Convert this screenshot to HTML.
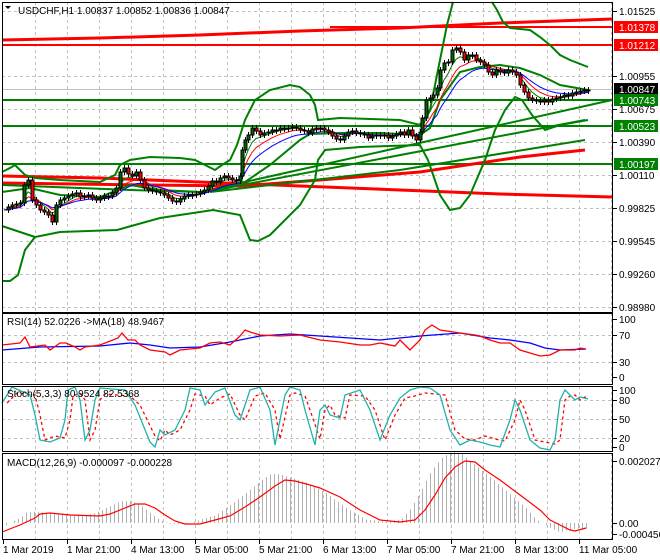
<!DOCTYPE html>
<html><head><meta charset="utf-8"><style>
html,body{margin:0;padding:0;background:#fff;width:660px;height:560px;overflow:hidden}
svg{display:block;font-family:"Liberation Sans",sans-serif}
</style></head><body>
<svg id="s" width="660" height="560" xmlns="http://www.w3.org/2000/svg"></svg>
<script>
var o='';
function P(pts,c,w,extra){var d=pts.map(function(p,i){return (i?'L':'M')+p[0]+' '+p[1]}).join('');o+='<path d="'+d+'" fill="none" stroke="'+c+'" stroke-width="'+w+'" '+(extra||'')+'/>';}
function L(x1,y1,x2,y2,c,w,ex){o+='<line x1="'+x1+'" y1="'+y1+'" x2="'+x2+'" y2="'+y2+'" stroke="'+c+'" stroke-width="'+w+'" '+(ex||'')+'/>';}
function T(x,y,t,c,fs,anchor){o+='<text x="'+x+'" y="'+y+'" fill="'+(c||'#000')+'" font-size="'+(fs||10)+'"'+(anchor?' text-anchor="'+anchor+'"':'')+'>'+t+'</text>';}
var DASH='stroke-dasharray="3,3"';
// vertical grid
var panels=[[2,312],[313,384],[386,451],[453,539]];
for(var x=35;x<612;x+=32){panels.forEach(function(p){L(x+.5,p[0],x+.5,p[1],'#c0c0c0',1,DASH)});}
// main horizontal grid
[11,44,76,109,142,175,208,241,274,307].forEach(function(y){L(2,y+.5,612,y+.5,'#c0c0c0',1,DASH)});
L(2,89.5,612,89.5,'#c0c0c0',1);
// rsi grid
[335,362].forEach(function(y){L(2,y+.5,612,y+.5,'#c0c0c0',1,DASH)});
[400,419,438].forEach(function(y){L(2,y+.5,612,y+.5,'#c0c0c0',1,DASH)});
// horizontal levels
L(2,45,612,45,'#ff0000',2);
L(330,27,612,27,'#ff0000',2);
P([[2,40],[100,38],[200,35],[300,31],[400,28],[500,23],[612,19]],'#ff0000',3);
L(2,100,612,100,'#008000',2);L(2,126,612,126,'#008000',2);L(2,164,612,164,'#008000',2);
// red / green trend lines
P([[2,176],[100,178],[200,182],[300,186],[400,190],[500,194],[612,197]],'#ff0000',3);
P([[2,183],[150,185],[240,186],[320,180],[420,172],[520,157],[585,150]],'#ff0000',3);
P([[2,185],[130,190],[200,192],[612,100]],'#008000',2);
P([[200,193],[585,120]],'#008000',2);
P([[210,192],[400,170],[585,140]],'#008000',2);
// bollinger
P([[2,172],[10,168],[15,165],[20,170],[25,175],[35,178],[60,180],[100,182],[115,175],[120,165],[130,160],[150,157],[180,158],[195,160],[205,165],[215,170],[222,165],[230,160],[237,145],[245,120],[255,100],[270,90],[290,85],[300,87],[310,95],[315,105],[318,120],[340,118],[400,120],[420,125],[430,110],[440,60],[447,25],[453,2]],'#008000',2);
P([[492,2],[497,10],[503,22],[510,28],[530,30],[540,37],[550,45],[560,55],[570,60],[588,67]],'#008000',2);
P([[2,192],[30,188],[60,195],[100,197],[130,185],[160,190],[200,192],[245,182],[270,165],[300,140],[310,134],[340,133],[380,133],[420,135],[430,128],[440,100],[460,72],[480,67],[500,65],[520,68],[540,75],[560,85],[588,90]],'#008000',2);
P([[2,281],[10,281],[18,275],[25,250],[35,237],[60,232],[117,230],[160,218],[213,210],[240,215],[250,240],[258,241],[270,235],[300,205],[315,180],[318,160],[325,150],[360,147],[420,145],[428,160],[440,195],[450,210],[460,208],[470,195],[485,160],[495,130],[505,110],[515,97],[522,100],[532,115],[545,130],[560,125],[588,120]],'#008000',2);
P([[2,226],[35,237]],'#008000',2);
// candles
var C=[[4,210],[8,207],[12,205],[16,204],[20,203],[24,185],[28,180],[32,200],[36,205],[40,210],[44,212],[48,215],[52,222],[56,205],[60,200],[64,198],[68,196],[72,194],[76,193],[80,197],[84,196],[88,195],[92,198],[96,200],[100,198],[104,196],[108,196],[112,193],[116,188],[120,172],[124,168],[128,174],[132,176],[136,172],[140,180],[144,188],[148,190],[152,191],[156,192],[160,193],[164,195],[168,198],[172,201],[176,202],[180,199],[184,196],[188,195],[192,195],[196,194],[200,192],[204,190],[208,186],[212,181],[216,182],[220,178],[224,176],[228,178],[232,180],[236,181],[240,176],[242,150],[245,140],[248,135],[252,128],[256,131],[260,135],[264,133],[268,132],[272,130],[276,130],[280,128],[284,129],[288,128],[292,127],[296,128],[300,130],[304,131],[308,133],[312,129],[316,128],[320,128],[324,130],[328,132],[332,136],[336,139],[340,140],[344,136],[348,132],[352,131],[356,133],[360,134],[364,135],[368,138],[372,136],[376,135],[380,136],[384,135],[388,138],[392,136],[396,134],[400,132],[404,135],[408,130],[412,136],[416,140],[420,132],[422,118],[426,100],[430,98],[433,95],[437,88],[440,70],[444,63],[448,62],[452,50],[456,48],[460,52],[464,60],[468,55],[472,55],[476,60],[480,62],[484,65],[488,72],[492,75],[496,70],[500,72],[504,73],[508,70],[512,72],[516,75],[520,85],[524,92],[528,98],[532,100],[536,101],[540,102],[544,100],[548,102],[552,99],[556,98],[560,97],[564,95],[568,96],[572,93],[576,92],[580,91],[584,90],[588,90]];
// MAs
function ema(a){var r=[],v=C[0][1];C.forEach(function(c){v=v+a*(c[1]-v);r.push([c[0],+v.toFixed(1)])});return r;}
P(ema(0.35),'#008000',1);P(ema(0.22),'#ff0000',1);P(ema(0.14),'#0000ff',1);
for(var i=1;i<C.length;i++){var x=C[i][0],op=C[i-1][1],cl=C[i][1];var t=Math.min(op,cl),b=Math.max(op,cl);if(b-t<1)b=t+1;
L(x+.5,t-3,x+.5,b+3,'#000',1);
o+='<rect x="'+(x-1)+'" y="'+t+'" width="3" height="'+(b-t)+'" fill="'+(cl<op?'#006400':'#ff0000')+'" stroke="#000" stroke-width="1"/>';}
// RSI
P([[2,350],[40,347],[100,346],[130,343],[150,345],[170,348],[200,347],[230,342],[260,336],[290,334],[320,336],[350,338],[380,340],[420,336],[460,333],[490,338],[510,340],[530,343],[545,348],[560,350],[586,349]],'#0000ff',1.3);
P([[2,345],[20,343],[25,337],[30,347],[45,345],[50,350],[60,343],[66,343],[75,347],[80,350],[85,347],[100,345],[118,338],[122,333],[128,340],[135,340],[140,345],[150,350],[165,352],[170,355],[180,350],[200,348],[210,343],[220,342],[230,345],[240,336],[245,330],[250,332],[260,335],[280,336],[300,335],[320,340],[340,342],[360,345],[370,345],[380,343],[395,346],[400,340],[410,350],[420,340],[425,330],[432,325],[440,330],[460,333],[475,335],[480,336],[490,340],[500,343],[510,343],[520,350],[530,353],[540,356],[550,355],[560,350],[575,350],[580,348],[586,349]],'#ff0000',1.3);
// Stoch
var K=[[2,403],[12,387],[30,395],[35,415],[40,440],[50,442],[60,438],[65,420],[68,390],[75,387],[80,400],[85,440],[90,430],[95,400],[100,388],[125,390],[135,405],[150,442],[155,447],[160,430],[165,435],[175,430],[185,410],[190,388],[200,390],[205,405],[215,392],[225,388],[235,415],[240,420],[250,390],[260,387],[270,410],[275,445],[285,395],[290,387],[300,390],[305,410],[315,445],[320,410],[325,405],[330,415],[340,418],[345,395],[360,390],[370,410],[380,440],[390,415],[400,398],[410,390],[420,387],[430,388],[440,395],[450,430],[460,445],[470,440],[480,442],[490,445],[500,447],[510,420],[515,400],[520,410],[530,440],[540,448],[550,450],[555,440],[560,400],[565,390],[570,395],[575,400],[580,397],[588,399]];
P(K.map(function(p){return [Math.min(p[0]+5,588),p[1]<395?p[1]+6:(p[1]>440?p[1]-6:p[1])]}),'#ff0000',1.3,DASH);
P(K,'#20b2aa',1.3);
// MACD
var S=[[2,532],[20,525],[35,518],[40,514],[50,513],[70,515],[100,516],[110,514],[125,508],[135,504],[145,504],[155,508],[165,515],[175,521],[185,524],[200,524],[215,520],[230,516],[245,507],[260,497],[275,486],[285,480],[295,481],[310,485],[320,488],[340,497],[360,510],[380,520],[400,522],[415,520],[425,510],[435,495],[445,478],[455,467],[465,461],[475,462],[485,470],[500,480],[520,495],[540,510],[550,520],[560,525],[570,530],[575,531],[586,528]];
function at(x){if(x<=S[0][0])return S[0][1];for(var i=1;i<S.length;i++){if(S[i][0]>=x){var a=S[i-1],b=S[i];return a[1]+(b[1]-a[1])*(x-a[0])/(b[0]-a[0]);}}return S[S.length-1][1];}
for(var x=6;x<=586;x+=4){var v=at(x+14);v=523-(523-v)*1.15;L(x+.5,523,x+.5,v,'#b0b0b0',1);}
P(S,'#ff0000',1.2);
// panel borders
panels.forEach(function(p){o+='<rect x="2.5" y="'+(p[0]+.5)+'" width="610" height="'+(p[1]-p[0])+'" fill="none" stroke="#000" stroke-width="1"/>';});
// right axis
var ax=[[11,'1.01525'],[76,'1.00955'],[109,'1.00675'],[142,'1.00390'],[175,'1.00110'],[208,'0.99825'],[241,'0.99545'],[274,'0.99260'],[307,'0.98980']];
ax.forEach(function(a){L(613,a[1]===undefined?0:a[0]+.5,617,a[0]+.5,'#000',1);T(619,a[0]+4,a[1],'#000',10);});
var bx=[[27,'1.01378','#ff0000','#fff'],[45,'1.01212','#ff0000','#fff'],[89,'1.00847','#000','#fff'],[100,'1.00743','#008000','#fff'],[126,'1.00523','#008000','#fff'],[164,'1.00197','#008000','#fff']];
bx.forEach(function(b){o+='<rect x="614" y="'+(b[0]-6)+'" width="44" height="12" fill="'+b[2]+'"/>';T(619,b[0]+4,b[1],b[3],10);});
[[319,'100'],[335,'70'],[362,'30'],[377,'0']].forEach(function(a){L(613,a[0]+.5,617,a[0]+.5,'#000',1);T(619,a[0]+4,a[1]);});
[[390,'100'],[400,'80'],[419,'50'],[438,'20'],[447,'0']].forEach(function(a){L(613,a[0]+.5,617,a[0]+.5,'#000',1);T(619,a[0]+4,a[1]);});
[[461,'0.002027'],[523,'0.00'],[534,'-0.000456']].forEach(function(a){L(613,a[0]+.5,617,a[0]+.5,'#000',1);T(619,a[0]+4,a[1]);});
// time axis
var tl=['1 Mar 2019','1 Mar 21:00','4 Mar 13:00','5 Mar 05:00','5 Mar 21:00','6 Mar 13:00','7 Mar 05:00','7 Mar 21:00','8 Mar 13:00','11 Mar 05:00'];
tl.forEach(function(t,i){var x=3+64*i;L(x+.5,540,x+.5,544,'#000',1);T(x,553,t);});
// titles
o+='<path d="M5 6 L11 6 L8 9Z" fill="#000"/>';
T(18,14,'USDCHF,H1  1.00837 1.00852 1.00836 1.00847');
T(7,325,'RSI(14) 52.0226  -&gt;MA(18) 48.9467');
T(7,397,'Stoch(5,3,3) 80.9524 82.5368');
T(7,466,'MACD(12,26,9) -0.000097 -0.000228');
document.getElementById('s').innerHTML=o;
</script>
</body></html>
